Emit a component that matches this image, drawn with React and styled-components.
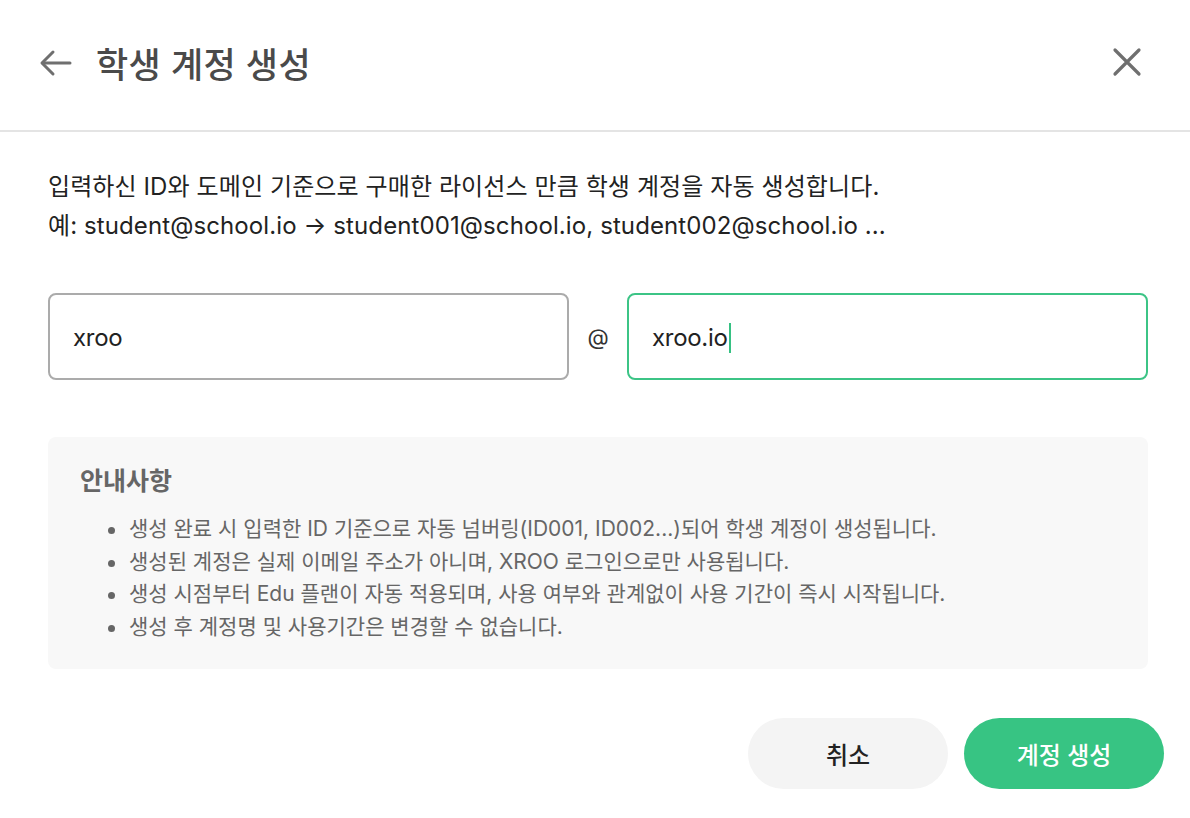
import React from "react";
import styled, { createGlobalStyle } from "styled-components";

const Global = createGlobalStyle`
  html, body { margin: 0; padding: 0; background: #fff; }
  body {
    font-family: Inter, "Noto Sans CJK KR", "Noto Sans", sans-serif;
    -webkit-font-smoothing: antialiased;
  }
  * { box-sizing: border-box; }
`;

const Page = styled.div`
  width: 1190px;
  height: 818px;
  background: #fff;
  display: flex;
  flex-direction: column;
`;

const Header = styled.header`
  height: 132px;
  border-bottom: 2px solid #e4e4e4;
  display: flex;
  align-items: center;
  padding: 0 47px 6px 38px;
`;

const IconButton = styled.button`
  border: 0;
  background: none;
  padding: 0;
  display: flex;
  align-items: center;
  justify-content: center;
  color: #6f6f6f;
  cursor: pointer;
`;

const Title = styled.h1`
  margin: 0 0 0 22px;
  flex: 1;
  font-size: 35px;
  font-weight: 500;
  color: #4a4a4a;
  letter-spacing: 0.4px;
`;

const Body = styled.main`
  padding: 35px 42px 0 48px;
  display: flex;
  flex-direction: column;
`;

const Desc = styled.p`
  margin: 0;
  font-size: 24px;
  line-height: 39px;
  color: #222;
  letter-spacing: 0.1px;
`;

const InputRow = styled.div`
  margin-top: 48px;
  display: flex;
  align-items: center;
`;

const Field = styled.div`
  flex: 1;
  height: 87px;
  border: 2px solid ${(p) => (p.$focused ? "#3cc486" : "#ababab")};
  border-radius: 8px;
  display: flex;
  align-items: center;
  padding: 2px 23px 0;
  font-size: 24px;
  color: #222;
  letter-spacing: -0.3px;
`;

const Caret = styled.span`
  display: inline-block;
  width: 2px;
  height: 30px;
  background: #36c183;
  margin-left: 1px;
`;

const At = styled.span`
  width: 58px;
  text-align: center;
  font-size: 22px;
  color: #333;
`;

const InfoBox = styled.section`
  margin-top: 57px;
  background: #f8f8f8;
  border-radius: 8px;
  padding: 28px 32px 25px;
`;

const InfoTitle = styled.h2`
  margin: 0;
  font-size: 25px;
  line-height: 32px;
  font-weight: 700;
  color: #666;
`;

const InfoList = styled.ul`
  margin: 16px 0 0;
  padding: 0 0 0 49px;
  list-style: none;
`;

const InfoItem = styled.li`
  position: relative;
  font-size: 21px;
  line-height: 32.7px;
  color: #666;
  letter-spacing: 0;
  &::before {
    content: "";
    position: absolute;
    left: -21px;
    top: 14px;
    width: 7px;
    height: 7px;
    border-radius: 50%;
    background: #666;
  }
`;

const Footer = styled.footer`
  margin-top: 49px;
  display: flex;
  justify-content: flex-end;
  gap: 16px;
  padding-right: 26px;
`;

const Button = styled.button`
  width: 200px;
  height: 71px;
  border: 0;
  border-radius: 36px;
  font-family: inherit;
  font-size: 24px;
  font-weight: 500;
  background: ${(p) => (p.$primary ? "#37c483" : "#f4f4f4")};
  color: ${(p) => (p.$primary ? "#fff" : "#222")};
  cursor: pointer;
`;

const items = [
  "생성 완료 시 입력한 ID 기준으로 자동 넘버링(ID001, ID002...)되어 학생 계정이 생성됩니다.",
  "생성된 계정은 실제 이메일 주소가 아니며, XROO 로그인으로만 사용됩니다.",
  "생성 시점부터 Edu 플랜이 자동 적용되며, 사용 여부와 관계없이 사용 기간이 즉시 시작됩니다.",
  "생성 후 계정명 및 사용기간은 변경할 수 없습니다.",
];

export default function App() {
  return (
    <>
      <Global />
      <Page>
        <Header>
          <IconButton aria-label="back">
            <svg width="36" height="36" viewBox="0 0 36 36" fill="none" stroke="currentColor" strokeWidth="3" strokeLinecap="round" strokeLinejoin="round">
              <path d="M32 19H5" />
              <path d="M15 8L4 19l11 11" />
            </svg>
          </IconButton>
          <Title>학생 계정 생성</Title>
          <IconButton aria-label="close">
            <svg width="32" height="32" viewBox="0 0 32 32" fill="none" stroke="currentColor" strokeWidth="3.2" strokeLinecap="round">
              <path d="M4 4l24 24M28 4L4 28" />
            </svg>
          </IconButton>
        </Header>
        <Body>
          <Desc>
            입력하신 ID와 도메인 기준으로 구매한 라이선스 만큼 학생 계정을 자동 생성합니다.
            <br />
            예: student@school.io → student001@school.io, student002@school.io ...
          </Desc>
          <InputRow>
            <Field>xroo</Field>
            <At>@</At>
            <Field $focused>
              xroo.io
              <Caret />
            </Field>
          </InputRow>
          <InfoBox>
            <InfoTitle>안내사항</InfoTitle>
            <InfoList>
              {items.map((t) => (
                <InfoItem key={t}>{t}</InfoItem>
              ))}
            </InfoList>
          </InfoBox>
        </Body>
        <Footer>
          <Button>취소</Button>
          <Button $primary>계정 생성</Button>
        </Footer>
      </Page>
    </>
  );
}
